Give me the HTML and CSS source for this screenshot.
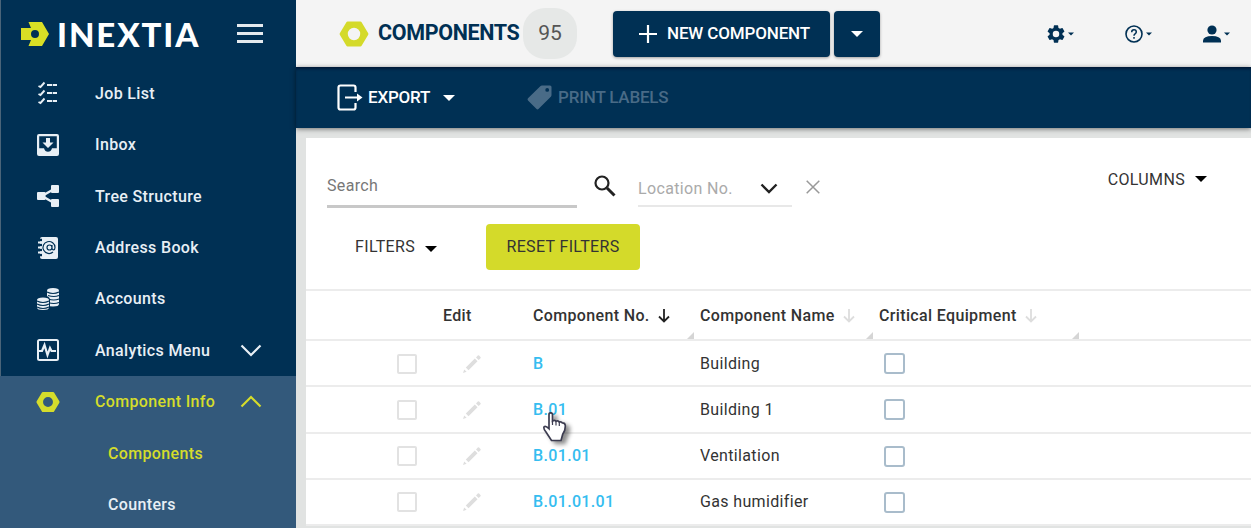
FILE: index.html
```html
<!DOCTYPE html>
<html lang="en">
<head>
  <meta charset="UTF-8" />
  <meta name="viewport" content="width=device-width, initial-scale=1.0"/>
  <title>Inextia - Components</title>
  <link rel="stylesheet" href="styles.css">
</head>
<body>

  <!-- Shared icons -->
  <svg class="sprite" width="0" height="0">
    <symbol id="nut" viewBox="0 0 30 26">
      <path fill-rule="evenodd" d="M8.6 0.5h12.8q.8 0 1.2.7l6.6 11q.4.8 0 1.6l-6.6 11q-.4.7-1.2.7H8.600q-.8 0-1.200-.7l-6.600-11q-.4-.8 0-1.600l6.600-11q.4-.7 1.200-.7zM15 6.800a6.200 6.200 0 1 0 0 12.400a6.200 6.200 0 1 0 0-12.400z"/>
    </symbol>
    <symbol id="caret" viewBox="0 0 12 6"><path d="M0 0h12L6 6z"/></symbol>
    <symbol id="chevron" viewBox="0 0 22 13"><path d="M1.500 1.500L11 11l9.500-9.500" fill="none" stroke="currentColor" stroke-width="2.200"/></symbol>
    <symbol id="arrow" viewBox="0 0 12 14"><path d="M6 0v12M1 7.500l5 5 5-5" fill="none" stroke="currentColor" stroke-width="1.800"/></symbol>
    <symbol id="pencil" viewBox="0 0 18 18"><path d="M0 18l1.200-3.600 2.400 2.400zM2.800 12.600l9-9 2.700 2.700-9 9zM13 2.400L14.800.6q.7-.6 1.300 0l1.400 1.400q.5.600 0 1.200L15.700 5z"/></symbol>
  </svg>

  <aside class="sidebar">
    <div class="brand">
      <svg class="brand-mark" width="28" height="24" viewBox="0 0 28 24">
        <path fill-rule="evenodd" d="M0 6h10L7.500 0H21l7 12-7 12H7.500L10 18H0zM14 8a4 4 0 1 0 0 8 4 4 0 1 0 0-8z"/>
      </svg>
      <span class="brand-name">INEXTIA</span>
      <button class="menu-btn"><span></span><span></span><span></span></button>
    </div>

    <nav>
      <a class="nav-item">
        <svg class="nav-icon" viewBox="0 0 24 24" fill="none" stroke="currentColor" stroke-width="1.900">
          <path d="M11 4h10M11 12h10M11 20h10" stroke-dasharray="5 .7"/>
          <path d="M2.500 5l2 1 4-4.500M2.500 13l2 1 4-4.500M2.500 21l2 1 4-4.500"/>
        </svg>
        <span>Job List</span>
      </a>
      <a class="nav-item">
        <svg class="nav-icon" viewBox="0 0 24 24">
          <path fill-rule="evenodd" d="M3 1h18q2 0 2 2v18q0 2-2 2H3q-2 0-2-2V3q0-2 2-2zM3.200 3.200v12H8q1 3.500 4 3.500t4-3.500h4.800v-12z"/>
          <path d="M10 5h4v4.500h3.500L12 15 6.500 9.500H10z"/>
        </svg>
        <span>Inbox</span>
      </a>
      <a class="nav-item">
        <svg class="nav-icon" viewBox="0 0 24 24">
          <rect x="1" y="8" width="8.500" height="8" rx="1"/>
          <rect x="15" y="1" width="8" height="8" rx="1"/>
          <rect x="15" y="15" width="8" height="8" rx="1"/>
          <path d="M19 4.500L6 12l13 7.500" fill="none" stroke="currentColor" stroke-width="2.400"/>
        </svg>
        <span>Tree Structure</span>
      </a>
      <a class="nav-item">
        <svg class="nav-icon" viewBox="0 0 24 24">
          <path d="M6 1h14q2 0 2 2v18q0 2-2 2H6q-2 0-2-2V3q0-2 2-2z"/>
          <path class="cut" d="M2 4h4M2 9h4M2 14h4M2 19h4" stroke-width="2.600"/>
          <path d="M2 6.500h5M2 11.500h5M2 16.500h5" stroke="currentColor" stroke-width="1.800"/>
          <path class="cut thin" d="M17 16a6 6 0 1 1 2-4.500c0 3-3 3-3 .5V9M16 11.500a2.500 2.500 0 1 0-5 0 2.500 2.500 0 1 0 5 0"/>
        </svg>
        <span>Address Book</span>
      </a>
      <a class="nav-item">
        <svg class="nav-icon" viewBox="0 0 24 24">
          <path d="M11 3.500Q11 1 17 1t6 2.500V17q0 2.500-6 2.500-4 0-6-1z"/>
          <path class="cut thin" d="M11 5q6 3 12 0M12 8.500q6 2 11 0M12 12q6 2 11 0M12 15.500q6 2 11 0"/>
          <path class="cut" d="M1 13q0-3.500 6-3.500t6 3.500v8H1z" stroke-width="2"/>
          <path d="M1 13q0-2.500 6-2.500t6 2.500v7.500Q13 23 7 23t-6-2.500z"/>
          <path class="cut thin" d="M1 14q6 3 12 0M1 17q6 3 12 0M1 20q6 3 12 0"/>
        </svg>
        <span>Accounts</span>
      </a>
      <a class="nav-item">
        <svg class="nav-icon" viewBox="0 0 24 24" fill="none" stroke="currentColor">
          <rect x="2" y="2" width="20" height="20" rx="1.500" stroke-width="2"/>
          <path d="M2 13h4l2.500-6 3 10 2.500-7 1.500 3h4.500" stroke-width="2.200"/>
        </svg>
        <span>Analytics Menu</span>
        <svg class="nav-chevron"><use href="#chevron"/></svg>
      </a>

      <div class="nav-group">
        <a class="nav-item active">
          <svg class="nav-icon"><use href="#nut"/></svg>
          <span>Component Info</span>
          <svg class="nav-chevron up"><use href="#chevron"/></svg>
        </a>
        <a class="nav-item sub active"><span>Components</span></a>
        <a class="nav-item sub"><span>Counters</span></a>
      </div>
    </nav>
  </aside>

  <main class="main">
    <header class="topbar">
      <svg class="title-icon"><use href="#nut"/></svg>
      <h1>COMPONENTS</h1>
      <span class="count">95</span>
      <button class="btn new-btn">
        <svg width="20" height="20" viewBox="0 0 20 20"><path d="M10 1v18M1 10h18" stroke="currentColor" stroke-width="2.200"/></svg>
        <span>NEW COMPONENT</span>
      </button>
      <button class="btn drop-btn"><svg class="caret"><use href="#caret"/></svg></button>

      <div class="user-tools">
        <div class="tool">
          <svg width="18" height="18" viewBox="2 2 20 20"><path d="M19.140 12.940c.04-.3.060-.61.060-.94s-.02-.64-.07-.94l2.030-1.580a.49.49 0 0 0 .12-.61l-1.920-3.320a.49.49 0 0 0-.59-.22l-2.390.96a7 7 0 0 0-1.620-.94l-.36-2.540A.48.48 0 0 0 13.920 2.400h-3.840a.47.47 0 0 0-.47.41l-.36 2.540c-.59.24-1.130.57-1.620.94l-2.390-.96a.48.48 0 0 0-.59.22L2.740 8.870a.47.47 0 0 0 .12.610l2.030 1.580a7.500 7.500 0 0 0 0 1.880l-2.030 1.580a.49.49 0 0 0-.12.610l1.920 3.320c.12.220.37.290.59.220l2.390-.96c.5.380 1.030.7 1.620.94l.36 2.540c.05.240.24.410.48.410h3.840c.24 0 .44-.17.470-.41l.36-2.540a7 7 0 0 0 1.620-.94l2.390.96c.22.080.47 0 .59-.22l1.920-3.320a.47.47 0 0 0-.12-.61zM12 15.600a3.600 3.600 0 1 1 0-7.200 3.600 3.600 0 0 1 0 7.200z"/></svg>
          <svg class="mini-caret"><use href="#caret"/></svg>
        </div>
        <div class="tool">
          <svg width="18" height="18" viewBox="0 0 18 18" fill="none" stroke="currentColor">
            <circle cx="9" cy="9" r="8" stroke-width="1.600"/>
            <path d="M6.700 7.200q0-2.400 2.300-2.400t2.300 2.200q0 1-1.200 1.800Q9 9.500 9 10.800M9 12v1.700" stroke-width="1.500"/>
          </svg>
          <svg class="mini-caret"><use href="#caret"/></svg>
        </div>
        <div class="tool">
          <svg width="18" height="18" viewBox="0 0 18 18"><circle cx="9" cy="5" r="4.600"/><path d="M0 17.500v-2Q.5 11 9 11t9 4.500v2z"/></svg>
          <svg class="mini-caret"><use href="#caret"/></svg>
        </div>
      </div>
    </header>

    <div class="toolbar">
      <div class="action export">
        <svg width="26" height="27" viewBox="0 0 26 27" fill="none" stroke="currentColor" stroke-width="2.200">
          <path d="M18.500 8V3.500q0-2-2-2H3.500q-2 0-2 2v20q0 2 2 2h13q2 0 2-2V19M8 13.500h13"/>
          <path d="M20 9.500l5.500 4-5.500 4z" fill="currentColor" stroke="none"/>
        </svg>
        <span>EXPORT</span>
        <svg class="caret"><use href="#caret"/></svg>
      </div>
      <div class="action labels disabled">
        <svg width="25" height="25" viewBox="0 0 25 25"><path fill-rule="evenodd" d="M15 .5h8q1.500 0 1.500 1.500v8q0 1-.7 1.700L11.700 23.800q-1.200 1.200-2.400 0L1 15.500q-1-1.100 0-2.200L13.300 1.200q.7-.7 1.700-.7zM20.200 3a1.900 1.900 0 1 0 0 3.800 1.900 1.900 0 1 0 0-3.800z"/></svg>
        <span>PRINT LABELS</span>
      </div>
    </div>

    <section class="panel">
      <div class="search-row">
        <div class="search">Search</div>
        <svg class="search-icon" viewBox="0 0 22 22" fill="none" stroke="currentColor"><circle cx="8" cy="8" r="6.500" stroke-width="2.200"/><path d="M13 13l7.500 7.500" stroke-width="3"/></svg>
        <div class="location">
          <span>Location No.</span>
          <svg width="18" height="11" viewBox="0 0 18 11"><path d="M1.500 1.500L9 9l7.500-7.500" fill="none" stroke="currentColor" stroke-width="2.400"/></svg>
        </div>
        <svg class="clear" viewBox="0 0 14 14"><path d="M.7.7l12.600 12.600M13.300.7L.7 13.300" stroke="currentColor" stroke-width="1.500"/></svg>
        <div class="columns"><span>COLUMNS</span><svg class="caret"><use href="#caret"/></svg></div>
      </div>

      <div class="filter-row">
        <div class="filters"><span>FILTERS</span><svg class="caret"><use href="#caret"/></svg></div>
        <button class="reset-btn"><span>RESET FILTERS</span></button>
      </div>

      <div class="grid">
        <div class="row head">
          <div></div>
          <div><span>Edit</span></div>
          <div class="resize"><span>Component No.</span><svg class="sort on"><use href="#arrow"/></svg></div>
          <div class="resize"><span>Component Name</span><svg class="sort"><use href="#arrow"/></svg></div>
          <div class="resize"><span>Critical Equipment</span><svg class="sort"><use href="#arrow"/></svg></div>
        </div>
        <div class="row">
          <div><i class="check"></i></div>
          <div><svg class="pencil"><use href="#pencil"/></svg></div>
          <div><a class="link">B</a></div>
          <div><span>Building</span></div>
          <div><i class="check blue"></i></div>
        </div>
        <div class="row">
          <div><i class="check"></i></div>
          <div><svg class="pencil"><use href="#pencil"/></svg></div>
          <div>
            <a class="link">B.01</a>
            <svg class="pointer" viewBox="0 0 24 30">
              <path d="M6 2.500q0-1.700 1.700-1.700t1.800 1.700V9q2.500-1.500 3.500.3 2.300-1 3.300.7 2.200-.7 3 .9 2.700-.1 3 2.600.2 5-2.500 8.500L18 28.500H8.500L3 20Q0 16.500 1.200 14.700q1.500-1.300 4.800 2z" fill="#fff" stroke="#3c3c50" stroke-width="1.700"/>
              <path d="M9.500 9v4M13 9.500v4M16.300 10v4" stroke="#3c3c50" stroke-width="1.200"/>
            </svg>
          </div>
          <div><span>Building 1</span></div>
          <div><i class="check blue"></i></div>
        </div>
        <div class="row">
          <div><i class="check"></i></div>
          <div><svg class="pencil"><use href="#pencil"/></svg></div>
          <div><a class="link">B.01.01</a></div>
          <div><span>Ventilation</span></div>
          <div><i class="check blue"></i></div>
        </div>
        <div class="row">
          <div><i class="check"></i></div>
          <div><svg class="pencil"><use href="#pencil"/></svg></div>
          <div><a class="link">B.01.01.01</a></div>
          <div><span>Gas humidifier</span></div>
          <div><i class="check blue"></i></div>
        </div>
      </div>
    </section>
  </main>

</body>
</html>
```
FILE: styles.css
```css
* {
  box-sizing: border-box;
}

body {
  margin: 0;
  height: 528px;
  display: flex;
  overflow: hidden;
  font-family: Roboto, sans-serif;
  font-size: 16px;
  line-height: 20px;
  letter-spacing: 0.35px;
  color: #333;
  background-color: #e1e3e2;
}

svg {
  fill: currentColor;
  flex: none;
}

svg[fill="none"] {
  fill: none;
}

button {
  border: none;
  padding: 0;
  font: inherit;
  letter-spacing: inherit;
  cursor: pointer;
}

.sprite {
  position: absolute;
}

.caret {
  width: 12px;
  height: 6px;
}

/* Sidebar */
.sidebar {
  width: 296px;
  flex: none;
  background-color: #003054;
  box-shadow: inset 1px 0 #4a6479;
  color: #e8eff5;
}

.brand {
  height: 67px;
  display: flex;
  align-items: center;
  padding-left: 21px;
}

.brand-mark {
  color: #d9df25;
}

.brand-name {
  width: 143px;
  margin-left: 8px;
  font-family: Lato, sans-serif;
  font-size: 33px;
  font-weight: 900;
  letter-spacing: 1.9px;
  color: #fff;
  white-space: nowrap;
}

.menu-btn {
  width: 26px;
  margin-left: 37px;
  display: grid;
  gap: 5px;
  background: none;
}

.menu-btn span {
  height: 3px;
  background-color: #e4eaee;
}

.nav-item {
  height: 51.45px;
  display: flex;
  align-items: center;
  padding: 1px 34px 0 36px;
  font-weight: 500;
}

.nav-item > span {
  padding-top: 1px;
}

.nav-icon {
  width: 24px;
  height: 24px;
  margin-right: 35px;
}

.nav-icon .cut {
  fill: none;
  stroke: #003054;
}

.nav-icon .thin {
  stroke-width: 1.2;
}

.nav-chevron {
  width: 22px;
  height: 13px;
  margin-left: auto;
}

.nav-chevron.up {
  transform: rotate(180deg);
}

.nav-group {
  height: 160px;
  background-color: #33597b;
}

.nav-item.active {
  color: #d5dc2b;
}

.nav-item.sub {
  padding-left: 108px;
}

/* Header */
.main {
  flex: 1;
  display: flex;
  flex-direction: column;
}

.topbar {
  height: 67px;
  flex: none;
  display: flex;
  align-items: center;
  padding: 0 21px 0 43px;
  background-color: #f4f4f4;
  color: #003054;
}

.title-icon {
  width: 30px;
  height: 26px;
  color: #d4da2a;
}

h1 {
  width: 145px;
  margin: 0 0 0 9px;
  padding-bottom: 1px;
  font-size: 21.5px;
  font-weight: 700;
  letter-spacing: -0.35px;
  white-space: nowrap;
}

.count {
  width: 54px;
  height: 51px;
  border-radius: 22px;
  display: flex;
  align-items: center;
  justify-content: center;
  padding-bottom: 2px;
  background-color: #e6e8e7;
  color: #555;
  font-size: 21px;
  letter-spacing: 0;
}

.btn {
  height: 46px;
  display: flex;
  align-items: center;
  justify-content: center;
  border-radius: 4px;
  background-color: #003054;
  color: #fff;
  box-shadow: 0 1px 3px rgba(0, 0, 0, 0.35);
}

.new-btn {
  width: 217px;
  margin-left: 36px;
  padding-left: 5px;
  gap: 9px;
  font-size: 17px;
  font-weight: 500;
  letter-spacing: -0.15px;
}

.new-btn span {
  padding-bottom: 1px;
}

.drop-btn {
  width: 46px;
  margin-left: 4px;
}

.user-tools {
  display: flex;
  gap: 51px;
  margin-left: auto;
}

.tool {
  display: flex;
  align-items: center;
  gap: 3px;
}

.mini-caret {
  width: 6px;
  height: 4px;
}

.toolbar {
  height: 61px;
  flex: none;
  display: flex;
  padding-left: 41px;
  background-color: #003054;
  color: #fff;
  font-size: 17px;
  font-weight: 500;
  letter-spacing: -0.2px;
  box-shadow: 0 1px 5px rgba(0, 0, 0, 0.5), inset 0 3px 3px -1px rgba(0, 0, 30, 0.5);
}

.action {
  display: flex;
  align-items: center;
}

.action span {
  padding-bottom: 1px;
}

.export {
  width: 190px;
}

.export span {
  margin: 0 13px 0 5px;
}

.labels {
  gap: 6px;
}

.disabled {
  color: #496b87;
}

/* Content panel */
.panel {
  height: 387px;
  margin: 10px 0 0 10px;
  background-color: #fff;
}

.search-row {
  height: 71px;
  display: flex;
  align-items: flex-start;
  padding: 36px 44px 0 21px;
}

.search {
  width: 250px;
  height: 34px;
  padding-top: 2px;
  border-bottom: 3px solid #c8c8c8;
  color: #777;
}

.search-icon {
  width: 22px;
  height: 22px;
  margin: 1px 0 0 17px;
  color: #222;
}

.location {
  width: 154px;
  height: 33px;
  margin-left: 22px;
  padding: 0 14px 3px 0;
  display: flex;
  align-items: center;
  justify-content: space-between;
  border-bottom: 2px solid #e8e8e8;
  color: #222;
}

.location span {
  padding-top: 2px;
  color: #aaa;
}

.clear {
  width: 14px;
  height: 14px;
  margin: 6px 0 0 14px;
  color: #999;
}

.columns,
.filters {
  display: flex;
  align-items: center;
  gap: 10px;
}

.columns {
  margin: -4px 0 0 auto;
}

.columns .caret,
.filters .caret {
  color: #000;
}

.columns .caret {
  margin-bottom: 2px;
}

.filter-row {
  height: 80px;
  display: flex;
  align-items: flex-start;
  padding: 15px 0 0 49px;
}

.filters {
  width: 131px;
  height: 46px;
}

.filters .caret {
  margin-top: 3px;
}

.reset-btn {
  width: 154px;
  height: 46px;
  border-radius: 4px;
  background-color: #d4da2a;
  color: #333;
}

/* Table */
.row {
  height: 46.25px;
  display: grid;
  grid-template-columns: 137px 90px 167px 179px 206px;
  border-bottom: 2px solid #ececec;
}

.row > div {
  position: relative;
  display: flex;
  align-items: center;
  padding-top: 1px;
}

.row.head {
  height: 52px;
  border-top: 2px solid #ececec;
  font-weight: 500;
}

.check {
  width: 20px;
  height: 20px;
  margin-left: 91px;
  border: 2px solid #e2e2e2;
  border-radius: 2px;
}

.check.blue {
  width: 21px;
  height: 21px;
  margin-left: 5px;
  border-color: #a9bccb;
  border-radius: 3px;
}

.pencil {
  width: 18px;
  height: 18px;
  margin-left: 20px;
  color: #dedede;
}

.link {
  color: #35bdf0;
  font-weight: 500;
}

.sort {
  width: 12px;
  height: 14px;
  margin-left: 8px;
  color: #ddd;
}

.sort.on {
  color: #222;
}

/* Column resize handle */
.resize::after {
  content: "";
  position: absolute;
  right: 6px;
  bottom: 0;
  border-left: 7px solid transparent;
  border-bottom: 7px solid #d5d5d5;
}

.pointer {
  position: absolute;
  left: 10px;
  top: 25px;
  width: 24px;
  height: 30px;
  z-index: 1;
  filter: drop-shadow(4px 3px 2px rgba(0, 0, 0, 0.45));
}
```
